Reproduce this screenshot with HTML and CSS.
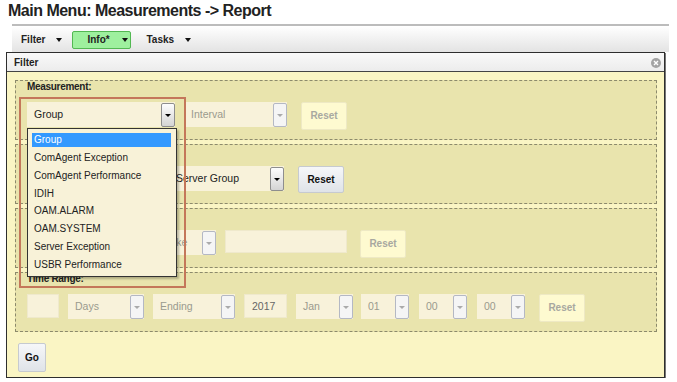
FILE: index.html
```html
<!DOCTYPE html>
<html lang="en">
<head>
<meta charset="UTF-8">
<title>Measurements Report</title>
<link rel="stylesheet" href="styles.css">
</head>
<body>

<h1 class="title">Main Menu: Measurements -&gt; Report</h1>
<div class="rule"></div>

<div class="menubar">
	<div class="menu-item">Filter <span class="caret"></span></div>
	<div class="menu-item info">Info* <span class="caret"></span></div>
	<div class="menu-item tasks">Tasks <span class="caret"></span></div>
</div>

<div class="panel">
	<div class="panel-head">
		<span>Filter</span>
		<svg class="close" width="10" height="10" viewBox="0 0 10 10">
			<circle cx="5" cy="5" r="5" fill="#a3a3a3"/>
			<path d="M3 3 L7 7 M7 3 L3 7" stroke="#fff" stroke-width="1.4"/>
		</svg>
	</div>
	<div class="panel-body">
		<div class="group">
			<div class="legend">Measurement:</div>
			<div class="row">
				<div class="select w-group"><span class="sel-text">Group</span><span class="sel-btn"><i></i></span></div>
				<div class="select off w-interval"><span class="sel-text">Interval</span><span class="sel-btn"><i></i></span></div>
				<div class="btn off r1">Reset</div>
			</div>
		</div>
		<!-- legend and first select of the next two rows sit under the open list -->
		<div class="group">
			<div class="legend"></div>
			<div class="row">
				<div class="select w-scope"><span class="sel-text"></span><span class="sel-btn"><i></i></span></div>
				<div class="select w-sg"><span class="sel-text">Server Group</span><span class="sel-btn"><i></i></span></div>
				<div class="btn r1">Reset</div>
			</div>
		</div>
		<div class="group">
			<div class="legend"></div>
			<div class="row">
				<div class="select off w-col"><span class="sel-text"></span><span class="sel-btn"><i></i></span></div>
				<div class="select off w-like"><span class="sel-text">Like</span><span class="sel-btn"><i></i></span></div>
				<div class="box w-text"></div>
				<div class="btn off r3">Reset</div>
			</div>
		</div>
		<div class="group">
			<div class="legend">Time Range:</div>
			<div class="row">
				<div class="box w-blank"></div>
				<div class="select off w-days"><span class="sel-text">Days</span><span class="sel-btn"><i></i></span></div>
				<div class="select off w-ending"><span class="sel-text">Ending</span><span class="sel-btn"><i></i></span></div>
				<div class="box w-year">2017</div>
				<div class="select off w-mon"><span class="sel-text">Jan</span><span class="sel-btn"><i></i></span></div>
				<div class="select off w-num m8"><span class="sel-text">01</span><span class="sel-btn"><i></i></span></div>
				<div class="select off w-num m10"><span class="sel-text">00</span><span class="sel-btn"><i></i></span></div>
				<div class="select off w-num m10"><span class="sel-text">00</span><span class="sel-btn"><i></i></span></div>
				<div class="btn off r1">Reset</div>
			</div>
		</div>
		<div class="btn go">Go</div>
	</div>
</div>

<!-- open list of the Measurement select -->
<ul class="dropdown">
	<li class="picked">Group</li>
	<li>ComAgent Exception</li>
	<li>ComAgent Performance</li>
	<li>IDIH</li>
	<li>OAM.ALARM</li>
	<li>OAM.SYSTEM</li>
	<li>Server Exception</li>
	<li>USBR Performance</li>
</ul>

<!-- highlight frame drawn over the screenshot -->
<div class="mark"></div>

</body>
</html>
```

FILE: styles.css
```css
*{ margin:0; padding:0; list-style:none; box-sizing:border-box;}
body{
	font-family:"Liberation Sans", Arial, sans-serif;
	background:#fff;
	color:#222;
	position:relative;
}
.title{
	font-size:16px;
	letter-spacing:-0.5px;
	line-height:22px;
	height:24px;
	padding-left:8px;
	color:#222;
}
.rule{
	margin:0 8px 1px 12px;
	border-top:2px solid #bcbcbc;
}
.menubar{
	margin-left:12px;
	width:657px;
	height:25px;
	padding-left:9px;
	display:flex;
	align-items:center;
	background:linear-gradient(#fefefe, #e3e3e3);
	font-size:10px;
	font-weight:bold;
}
.menu-item{
	display:flex;
	align-items:center;
	height:18px;
}
.caret{
	display:inline-block;
	margin-left:11px;
	width:0;
	height:0;
	border-left:3px solid transparent;
	border-right:3px solid transparent;
	border-top:4px solid #111;
}
.info{
	margin-left:10px;
	width:59px;
	padding-left:14px;
	background:#9ef09e;
	border:1px solid #52b852;
	border-radius:2px;
}
.info .caret{ margin-left:12px;}
.tasks{ margin-left:15px;}

.panel{
	margin-left:6px;
	width:659px;
	border:1px solid #2e2e2e;
	box-shadow:1px 1px 0 #777;
}
.panel-head{
	height:19px;
	border-bottom:1px solid #444;
	background:linear-gradient(#f9f9f9, #ececec);
	display:flex;
	align-items:center;
	justify-content:space-between;
	padding:0 3px 0 7px;
	font-size:10px;
	font-weight:bold;
}
.close{ margin-top:1px;}
.panel-body{
	background:#faf5c4;
	padding:8px 7px 5px 8px;
}
.group{
	height:60px;
	margin-bottom:4px;
	border:1px dashed #8c8a6c;
	background:#e9e4ad;
	padding-left:11px;
}
.legend{
	font-size:10px;
	font-weight:bold;
	line-height:12px;
	height:12px;
	margin-bottom:9px;
	letter-spacing:-0.3px;
}
.row{
	display:flex;
	align-items:flex-start;
}
.select{
	display:flex;
	height:25px;
	background:#f8f2da;
	font-size:10.5px;
	margin-left:9px;
}
.select:first-child{ margin-left:0;}
.sel-text{
	flex:1;
	line-height:25px;
	padding-left:7px;
	white-space:nowrap;
	overflow:hidden;
}
.sel-btn{
	width:14px;
	height:24px;
	margin-top:1px;
	border:1px solid #8e8e8e;
	border-radius:2px;
	background:linear-gradient(#fdfdfd, #d4d4d4);
	display:flex;
	justify-content:center;
	padding-top:10px;
}
.sel-btn i{
	width:0;
	height:0;
	border-left:3px solid transparent;
	border-right:3px solid transparent;
	border-top:3px solid #000;
}
.select.off{ color:#9a9a8e;}
.select.off .sel-btn{
	border-color:#b4b8c4;
	background:#f5f5f5;
}
.select.off .sel-btn i{ border-top-color:#aaa;}

.w-group{ width:148px;}
.w-interval{ width:103px;}
.w-scope{ width:133px;}
.w-sg{ width:115px;}
.w-col{ width:125px;}
.w-like{ width:55px;}
.w-days{ width:76px;}
.w-ending{ width:82px;}
.w-mon{ width:57px;}
.w-num{ width:48px;}
.m8{ margin-left:8px;}
.m10{ margin-left:10px;}

.box{
	height:24px;
	background:#f8f2da;
	border:1px solid #efe9cc;
	font-size:10.5px;
	line-height:22px;
	padding-left:7px;
	color:#666;
}
.w-text{ width:122px; margin-left:9px; height:23px;}
.w-blank{ width:32px;}
.w-year{ width:43px; margin-left:9px;}

.btn{
	width:46px;
	height:27px;
	font-size:10px;
	font-weight:bold;
	text-align:center;
	line-height:25px;
	border:1px solid #c6cad0;
	border-radius:2px;
	background:linear-gradient(#f6f7f9, #dfe3e8);
	color:#111;
}
.btn.off{
	height:28px;
	background:#fefad0;
	border-color:#eee9c4;
	color:#a8a8a0;
}
.r1{ margin-left:14px;}
.r3{ margin-left:13px;}
.go{
	width:28px;
	height:29px;
	line-height:27px;
	margin:11px 0 0 3px;
}

.dropdown{
	position:absolute;
	left:27px;
	top:128px;
	width:150px;
	height:149px;
	border:1px solid #333;
	background:#f8f2d8;
	box-shadow:2px 2px 2px rgba(0,0,0,0.25);
	padding-top:4px;
	font-size:10px;
}
.dropdown li{
	height:14px;
	line-height:14px;
	margin:0 5px 3.86px 4px;
	padding-left:2px;
	color:#222;
}
.dropdown li.picked{
	background:#3399ff;
	color:#fff;
}
.mark{
	position:absolute;
	left:19px;
	top:97px;
	width:167px;
	height:191px;
	border:2px solid #c4775a;
	pointer-events:none;
}
```
